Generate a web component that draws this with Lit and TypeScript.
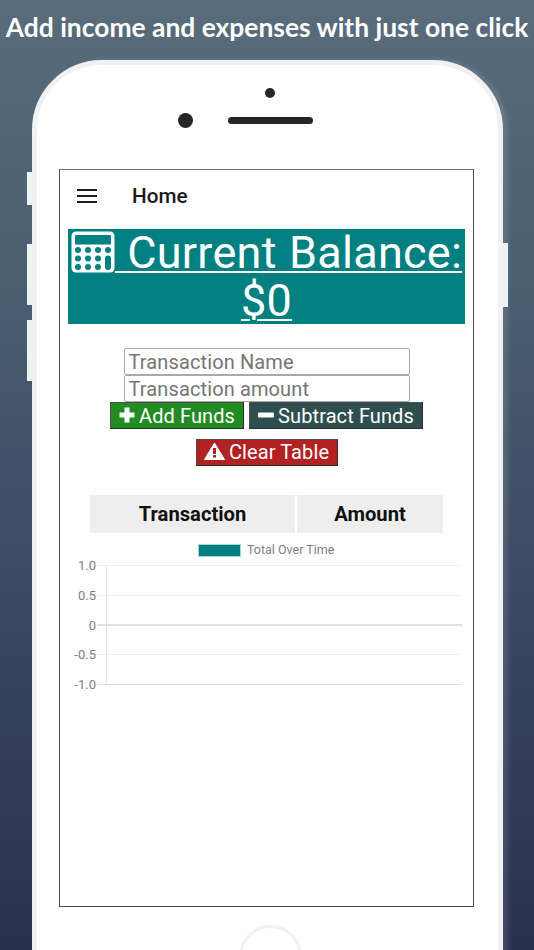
import { LitElement, html, css, svg } from "lit";
import { customElement } from "lit/decorators.js";

@customElement("app-root")
export class AppRoot extends LitElement {
  static styles = css`
    :host {
      display: block;
      width: 534px;
      height: 950px;
      overflow: hidden;
      background: linear-gradient(180deg, #586c7b 0%, #4b5e70 30%, #3a4761 65%, #2a3050 100%);
      font-family: Roboto, "Liberation Sans", sans-serif;
    }
    .title {
      height: 60px;
      padding-top: 12px;
      box-sizing: border-box;
      text-align: center;
      color: #fff;
      font-family: Lato, "Open Sans", sans-serif;
      font-weight: 700;
      font-size: 26.4px;
      line-height: 31px;
      white-space: nowrap;
    }
    .phone {
      position: relative;
      box-sizing: border-box;
      margin-left: 32px;
      width: 471px;
      height: 1000px;
      background: #fff;
      border: 5px solid #f0f1f3;
      border-radius: 70px;
      box-shadow: 5px 0 5px rgba(255, 255, 255, 0.12);
      display: flex;
      flex-direction: column;
      align-items: center;
    }
    .side {
      position: absolute;
      width: 5px;
      background: #f0f1f3;
    }
    .s1 { left: -10px; top: 107px; height: 33px; }
    .s2 { left: -10px; top: 179px; height: 61px; }
    .s3 { left: -10px; top: 255px; height: 61px; }
    .s4 { right: -10px; top: 178px; height: 64px; }
    .dot {
      position: absolute;
      left: 228px;
      top: 23px;
      width: 10px;
      height: 10px;
      border-radius: 50%;
      background: #262626;
    }
    .cam {
      position: absolute;
      left: 141px;
      top: 48px;
      width: 15px;
      height: 15px;
      border-radius: 50%;
      background: #262626;
    }
    .speaker {
      position: absolute;
      left: 191px;
      top: 52px;
      width: 85px;
      height: 7px;
      border-radius: 4px;
      background: #262626;
    }
    .home-btn {
      position: absolute;
      left: 202px;
      top: 860px;
      width: 63px;
      height: 63px;
      box-sizing: border-box;
      border-radius: 50%;
      border: 3px solid #f0f1f3;
    }
    .screen {
      box-sizing: border-box;
      width: 415px;
      height: 738px;
      margin-top: 104px;
      margin-right: 2px;
      border: 1px solid #4a4a4a;
      border-top-color: #777;
      background: #fff;
      display: flex;
      flex-direction: column;
      align-items: stretch;
    }
    .bar {
      height: 51px;
      flex: none;
      display: flex;
      align-items: center;
      padding-left: 17px;
      color: #1a1a1a;
    }
    .burger {
      width: 20px;
      height: 14px;
      display: flex;
      flex-direction: column;
      justify-content: space-between;
      margin-right: 35px;
    }
    .burger i {
      display: block;
      height: 2px;
      background: #1c1c1c;
    }
    .bar span {
      font-size: 20.7px;
      font-weight: 500;
    }
    .balance {
      flex: none;
      box-sizing: border-box;
      margin: 8px 8px 0 8px;
      height: 95px;
      background: #008080;
      color: #fff;
      font-size: 45px;
      letter-spacing: 0.25px;
      word-spacing: 1px;
      line-height: 47.5px;
      text-align: center;
      text-decoration: underline;
      text-decoration-thickness: 2px;
      text-underline-offset: 3px;
      white-space: nowrap;
    }
    .balance svg {
      width: 44px;
      height: 42px;
      vertical-align: -5px;
    }
    .form {
      flex: none;
      display: flex;
      flex-direction: column;
      align-items: center;
      padding-top: 24px;
    }
    .input {
      box-sizing: border-box;
      width: 286px;
      height: 27px;
      border: 1px solid #a9a9a9;
      border-radius: 2px;
      padding-left: 4px;
      font-size: 20px;
      letter-spacing: 0.12px;
      line-height: 26px;
      color: #757575;
      background: #fff;
    }
    .btns {
      display: flex;
      gap: 5px;
      justify-content: center;
    }
    .btn {
      box-sizing: border-box;
      height: 27px;
      padding-top: 2px;
      display: flex;
      align-items: center;
      justify-content: center;
      gap: 4px;
      color: #fff;
      font-size: 20px;
      letter-spacing: 0.1px;
      line-height: 25px;
      white-space: nowrap;
      border: 1px solid #333;
      border-color: #4d4d4d #2d2d2d #2d2d2d #4d4d4d;
    }
    .add { width: 134px; background: #228b22; }
    .sub { width: 174px; background: #2f4f4f; }
    .clear { width: 142px; background: #b22222; margin-top: 10px; padding-top: 0; }
    .btn svg { flex: none; margin-top: -3px; }
    .table {
      flex: none;
      margin: 29px 0 0 30px;
      display: grid;
      grid-template-columns: 205px 146px;
      gap: 2px;
      width: 353px;
    }
    .th {
      height: 38px;
      background: #eee;
      display: flex;
      align-items: center;
      justify-content: center;
      color: #111;
      font-size: 20.2px;
      font-weight: 700;
    }
    .chart {
      flex: none;
      display: block;
      margin-top: 1px;
      width: 413px;
      height: 160px;
    }
    .chart text {
      font-family: Roboto, "Liberation Sans", sans-serif;
      fill: #808080;
    }
  `;

  private chart() {
    const ys = [
      { y: 31.5, l: "1.0" },
      { y: 61.5, l: "0.5" },
      { y: 91, l: "0", zero: true },
      { y: 120.5, l: "-0.5" },
      { y: 150.5, l: "-1.0", end: true },
    ];
    return html`<svg class="chart" viewBox="0 0 413 160">
      <rect x="138.5" y="10.5" width="42" height="12" fill="#008080" stroke="#a8d5d5" stroke-width="1"></rect>
      <text x="187" y="20" font-size="12.5">Total Over Time</text>
      <line x1="46.5" x2="46.5" y1="31" y2="151" stroke="#e4e4e4"></line>
      ${ys.map(
        (t) => svg`
          <line x1="37" x2="402" y1=${t.y} y2=${t.y}
            stroke=${t.zero ? "#d8d8d8" : t.end ? "#dcdcdc" : "#eeeeee"}
            stroke-width=${t.zero ? 1.5 : 1}></line>
          <text x="36" y=${t.y + 4.5} font-size="13" text-anchor="end">${t.l}</text>`
      )}
    </svg>`;
  }

  render() {
    return html`
      <div class="title">Add income and expenses with just one click</div>
      <div class="phone">
        <div class="side s1"></div>
        <div class="side s2"></div>
        <div class="side s3"></div>
        <div class="side s4"></div>
        <div class="dot"></div>
        <div class="cam"></div>
        <div class="speaker"></div>
        <div class="home-btn"></div>
        <div class="screen">
          <div class="bar">
            <div class="burger"><i></i><i></i><i></i></div>
            <span>Home</span>
          </div>
          <div class="balance">
            <svg viewBox="0 0 44 42">
              <rect x="0.5" y="0.5" width="43" height="41" rx="4.5" fill="#fff"></rect>
              <rect x="4" y="4" width="36" height="9.5" rx="1" fill="#008080"></rect>
              ${[19, 27.5, 36].map((cy) =>
                [7, 17, 27].map((cx) => svg`<circle cx=${cx} cy=${cy} r="3" fill="#008080"></circle>`)
              )}
              <circle cx="37" cy="19" r="3" fill="#008080"></circle>
              <rect x="34" y="24.5" width="6" height="14.5" rx="3" fill="#008080"></rect>
            </svg>
            Current Balance:<br />$0
          </div>
          <div class="form">
            <div class="input">Transaction Name</div>
            <div class="input">Transaction amount</div>
            <div class="btns">
              <div class="btn add">
                <svg width="16" height="16" viewBox="0 0 16 16"><path d="M5.5 .5h5v5h5v5h-5v5h-5v-5h-5v-5h5z" fill="#fff"></path></svg>
                Add Funds
              </div>
              <div class="btn sub">
                <svg width="16" height="16" viewBox="0 0 16 16"><rect x="0" y="5.5" width="16" height="5" rx="1" fill="#fff"></rect></svg>
                Subtract Funds
              </div>
            </div>
            <div class="btn clear">
              <svg width="21" height="18" viewBox="0 0 21 18">
                <path d="M10.5 1 20.5 17.5H.5z" fill="#fff" stroke="#fff" stroke-linejoin="round"></path>
                <rect x="9" y="6" width="3" height="6" fill="#b22222"></rect>
                <rect x="9" y="13" width="3" height="2.6" fill="#b22222"></rect>
              </svg>
              Clear Table
            </div>
          </div>
          <div class="table">
            <div class="th">Transaction</div>
            <div class="th">Amount</div>
          </div>
          ${this.chart()}
        </div>
      </div>
    `;
  }
}
